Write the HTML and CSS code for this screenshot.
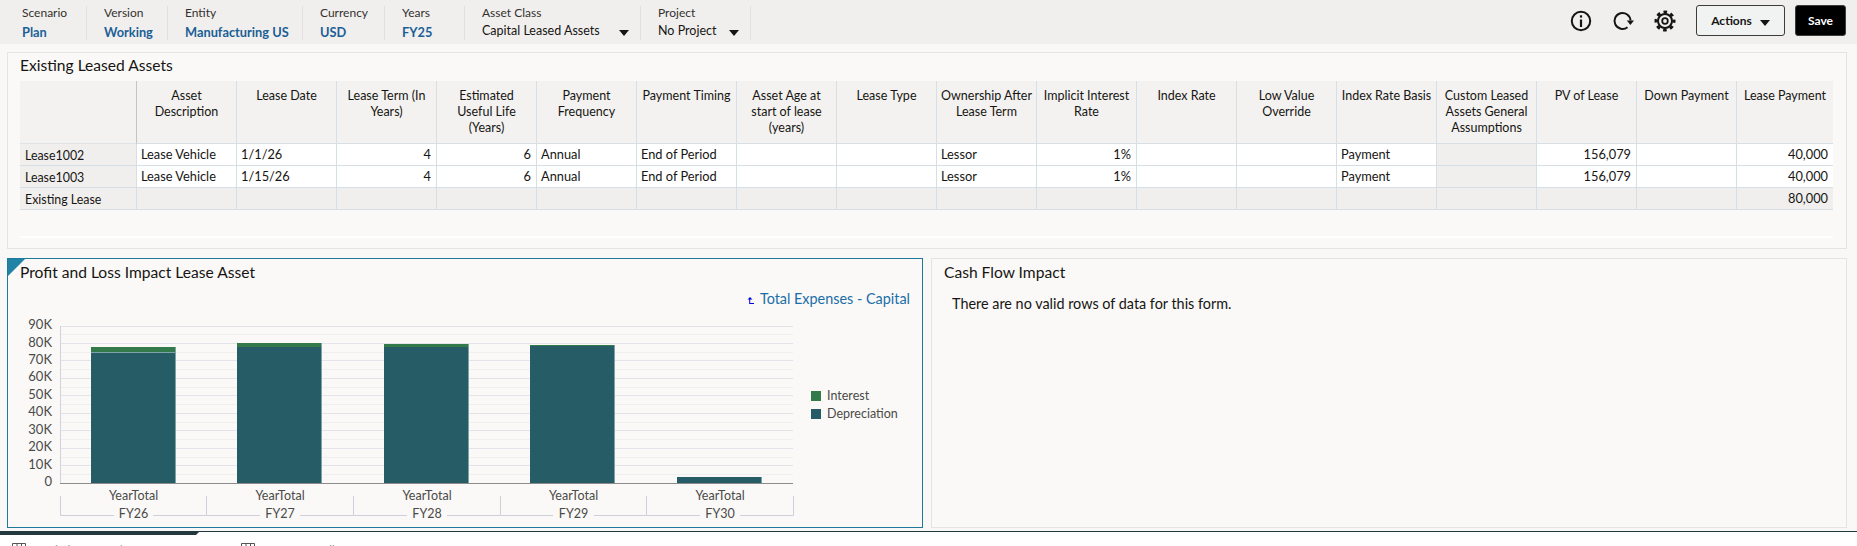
FILE: index.html
```html
<!DOCTYPE html>
<html lang="en">
<head>
<meta charset="utf-8">
<title>Existing Leased Assets</title>
<link rel="stylesheet" href="styles.css">
</head>
<body>
<header class="topbar">
  <div class="pov">
    <div class="pov-item first"><span class="pov-label">Scenario</span><span class="pov-value">Plan</span></div>
    <div class="pov-item"><span class="pov-label">Version</span><span class="pov-value">Working</span></div>
    <div class="pov-item"><span class="pov-label">Entity</span><span class="pov-value">Manufacturing US</span></div>
    <div class="pov-item"><span class="pov-label">Currency</span><span class="pov-value">USD</span></div>
    <div class="pov-item"><span class="pov-label">Years</span><span class="pov-value">FY25</span></div>
    <div class="pov-item"><span class="pov-label">Asset Class</span><span class="pov-select">Capital Leased Assets<i class="caret"></i></span></div>
    <div class="pov-item"><span class="pov-label">Project</span><span class="pov-select">No Project<i class="caret"></i></span></div>
  </div>
  <div class="tools">
    <svg class="icon" viewBox="0 0 22 22"><circle cx="11" cy="11" r="9.2" fill="none" stroke="#161513" stroke-width="2"/><rect x="9.900" y="9.500" width="2.200" height="7.500" fill="#161513"/><rect x="9.900" y="5.300" width="2.200" height="2.300" fill="#161513"/></svg>
    <svg class="icon" viewBox="0 0 22 22"><path d="M15.500 17.200A8 8 0 1 1 18.500 10.500" fill="none" stroke="#161513" stroke-width="2"/><path d="M14.800 10.500h7.200l-3.600 4.500z" fill="#161513"/></svg>
    <svg class="icon" viewBox="0 0 22 22"><circle cx="11" cy="11" r="9" fill="none" stroke="#161513" stroke-width="3" stroke-dasharray="3.600 3.469" stroke-dashoffset="1.800"/><circle cx="11" cy="11" r="7" fill="none" stroke="#161513" stroke-width="2"/><circle cx="11" cy="11" r="2.800" fill="none" stroke="#161513" stroke-width="1.800"/></svg>
    <button class="btn btn-actions" type="button">Actions<i class="caret"></i></button>
    <button class="btn btn-save" type="button">Save</button>
  </div>
</header>

<main class="content">
  <section class="panel panel-grid">
    <h2 class="panel-title">Existing Leased Assets</h2>
    <table class="grid">
      <thead>
        <tr>
          <th class="corner"></th>
          <th>Asset Description</th><th>Lease Date</th><th>Lease Term (In Years)</th><th>Estimated<br>Useful Life<br>(Years)</th><th>Payment Frequency</th><th>Payment Timing</th><th>Asset Age at start of lease (years)</th><th>Lease Type</th><th>Ownership After Lease Term</th><th>Implicit Interest Rate</th><th>Index Rate</th><th>Low Value Override</th><th>Index Rate Basis</th><th>Custom Leased Assets General Assumptions</th><th>PV of Lease</th><th>Down Payment</th><th>Lease Payment</th>
        </tr>
      </thead>
      <tbody>
        <tr>
          <th class="rowhead">Lease1002</th>
          <td>Lease Vehicle</td><td>1/1/26</td><td class="num">4</td><td class="num">6</td><td>Annual</td><td>End of Period</td><td></td><td></td><td>Lessor</td><td class="num">1%</td><td></td><td></td><td>Payment</td><td class="off"></td><td class="num">156,079</td><td></td><td class="num">40,000</td>
        </tr>
        <tr>
          <th class="rowhead">Lease1003</th>
          <td>Lease Vehicle</td><td>1/15/26</td><td class="num">4</td><td class="num">6</td><td>Annual</td><td>End of Period</td><td></td><td></td><td>Lessor</td><td class="num">1%</td><td></td><td></td><td>Payment</td><td class="off"></td><td class="num">156,079</td><td></td><td class="num">40,000</td>
        </tr>
        <tr class="total">
          <th class="rowhead">Existing Lease</th>
          <td></td><td></td><td></td><td></td><td></td><td></td><td></td><td></td><td></td><td></td><td></td><td></td><td></td><td></td><td></td><td></td><td class="num">80,000</td>
        </tr>
      </tbody>
    </table>
    <div class="grid-end"></div>
  </section>

  <div class="lower">
    <section class="panel panel-chart">
      <span class="corner-mark"></span>
      <h2 class="panel-title">Profit and Loss Impact Lease Asset</h2>
      <div class="drill">
        <svg class="drill-icon" viewBox="0 0 7 8"><path d="M3 0 0.500 2.600H2.200V7H7V6H3.200V2.600H5.500z" fill="#0000e0"/></svg>
        <a class="drill-link">Total Expenses - Capital</a>
      </div>
      <svg class="chart" viewBox="8 316 914 211" width="914" height="211">
        <path class="minor" d="M60 334.500H793M60 352.500H793M60 369.500H793M60 387.500H793M60 404.500H793M60 422.500H793M60 439.500H793M60 457.500H793M60 474.500H793"/>
        <path class="major" d="M60 326.500H793M60 343.500H793M60 360.500H793M60 378.500H793M60 395.500H793M60 413.500H793M60 430.500H793M60 448.500H793M60 465.500H793"/>
        <path class="yaxis" d="M60.500 326V483"/>
        <rect class="dep" x="91" y="352" width="85" height="131"/><rect class="int" x="91" y="347" width="85" height="5"/>
        <rect class="dep" x="237" y="347" width="85" height="136"/><rect class="int" x="237" y="343" width="85" height="4"/>
        <rect class="dep" x="384" y="347" width="85" height="136"/><rect class="int" x="384" y="344" width="85" height="3"/>
        <rect class="dep" x="530" y="346" width="85" height="137"/><rect class="int" x="530" y="345" width="85" height="1"/>
        <rect class="dep" x="677" y="477" width="85" height="6"/>
        <path class="edge" d="M91 352.500H176M175.500 347V483M321.500 343V483M468.500 344V483M614.500 345V483M761.500 477V483"/>
        <path class="base" d="M60 483.500H793"/>
        <g class="ylab">
          <text x="52" y="329">90K</text><text x="52" y="347">80K</text><text x="52" y="364">70K</text><text x="52" y="381">60K</text><text x="52" y="399">50K</text><text x="52" y="416">40K</text><text x="52" y="434">30K</text><text x="52" y="451">20K</text><text x="52" y="469">10K</text><text x="52" y="486">0</text>
        </g>
        <g class="xlab">
          <text x="133.500" y="500">YearTotal</text><text x="280" y="500">YearTotal</text><text x="427" y="500">YearTotal</text><text x="573.500" y="500">YearTotal</text><text x="720" y="500">YearTotal</text>
          <text x="133.500" y="518">FY26</text><text x="280" y="518">FY27</text><text x="427" y="518">FY28</text><text x="573.500" y="518">FY29</text><text x="720" y="518">FY30</text>
        </g>
        <path class="bracket" d="M60.500 496V515.500H114M153 515.500H206.500M206.500 496V515.500H260M300 515.500H353.500M353.500 496V515.500H407M447 515.500H500.500M500.500 496V515.500H553M594 515.500H646.500M646.500 496V515.500H700M740 515.500H793.500V496"/>
        <rect class="int" x="811" y="391" width="10" height="10"/>
        <rect class="dep" x="811" y="409" width="10" height="10"/>
        <g class="legend">
          <text x="827" y="400">Interest</text><text x="827" y="418">Depreciation</text>
        </g>
      </svg>
    </section>
    <section class="panel panel-cash">
      <h2 class="panel-title">Cash Flow Impact</h2>
      <p class="empty">There are no valid rows of data for this form.</p>
    </section>
  </div>
</main>

<footer class="tabs">
  <div class="tabline"></div>
  <div class="tabrow">
    <span class="tab tab-one"><svg class="tab-icon" viewBox="0 0 14 12"><path d="M.5.5h13v11H.5zM.5 4h13M5 .5v11M9.500 .5v11" fill="none" stroke="#555" /></svg><span class="tab-text">Existing Leased Assets</span></span>
    <span class="tab"><svg class="tab-icon" viewBox="0 0 14 12"><path d="M.5.5h13v11H.5zM.5 4h13M5 .5v11M9.500 .5v11" fill="none" stroke="#555" /></svg><span class="tab-text">Lease Details</span></span>
  </div>
</footer>
</body>
</html>
```

FILE: styles.css
```css
* { box-sizing: border-box; }
html, body { margin: 0; padding: 0; }
body {
  width: 1857px;
  height: 546px;
  overflow: hidden;
  background: #fff;
  color: #161513;
  font-family: Lato, "Noto Sans", sans-serif;
  font-size: 12px;
}

/* top bar */
.topbar {
  height: 44px;
  background: #f1efed;
  display: flex;
  justify-content: space-between;
}
.pov {
  display: grid;
  grid-template-columns: 87px 81px 135px 82px 80px 176px 110px;
  padding-top: 6px;
}
.pov-item {
  height: 34px;
  padding-left: 17px;
  border-right: 1px solid #e2e0dd;
  display: flex;
  flex-direction: column;
}
.pov-item.first { padding-left: 22px; }
.pov-label { font-size: 12px; line-height: 13px; color: #33312e; }
.pov-value { margin-top: 6px; font-size: 12.8px; line-height: 15px; font-weight: 700; color: #1b5f97; }
.pov-select { margin-top: 4px; font-size: 12.5px; line-height: 15px; padding-right: 11px; display: flex; align-items: center; justify-content: space-between; }
.caret {
  display: inline-block;
  width: 0; height: 0;
  margin-top: 5px;
  border-left: 5px solid transparent;
  border-right: 5px solid transparent;
  border-top: 6px solid #161513;
}
.tools { display: flex; align-items: flex-start; padding: 5px 11px 0 0; }
.icon { width: 22px; height: 22px; margin: 5px 20px 0 0; }
.btn {
  height: 31px;
  border-radius: 3px;
  font-family: inherit;
  font-size: 12px;
  font-weight: 700;
  padding: 0;
}
.btn-actions {
  width: 89px;
  background: #f1f3f3;
  border: 1px solid #3d3c3a;
  color: #161513;
}
.btn-actions .caret { margin-left: 8px; margin-top: 0; vertical-align: -1px; }
.btn-save {
  width: 51px;
  margin-left: 10px;
  background: #000;
  border: 1px solid #3d3c3a;
  color: #fff;
}

/* panels */
.content {
  height: 487px;
  padding: 8px 10px 0 7px;
  background: #f9f8f6;
}
.panel {
  background: #faf9f7;
  border: 1px solid #e4e5e2;
}
.panel-title {
  margin: 0;
  font-size: 15.6px;
  line-height: 20px;
  font-weight: 400;
}
.panel-grid { height: 197px; padding: 2px 0 0 12px; }
.lower {
  margin-top: 9px;
  display: grid;
  grid-template-columns: 916px 916px;
  column-gap: 8px;
}

/* data grid */
.grid {
  margin-top: 6px;
  table-layout: fixed;
  border-collapse: separate;
  border-spacing: 0;
  width: 1813px;
}
.grid th, .grid td {
  font-weight: 400;
  font-size: 12.8px;
  padding: 0;
  overflow: hidden;
}
.grid thead th {
  width: 100px;
  height: 63px;
  padding: 7px 2px 0;
  font-size: 12.5px;
  line-height: 16px;
  text-align: center;
  vertical-align: top;
  background: #f3f2f0;
  border-left: 1px solid #d6dfe6;
  border-bottom: 1px solid #d6dfe6;
}
.grid thead th.corner {
  width: 116px;
  border-left: 0;
  border-bottom: 1px solid #e0e4e6;
}
.grid thead th.corner + th { border-left: 1px solid #c4c4c4; }
.grid thead th:last-child { width: 97px; }
.grid tbody td {
  height: 22px;
  padding: 0 5px 1px 4px;
  background: #fff;
  border-left: 1px solid #d6dfe6;
  border-bottom: 1px solid #d6dfe6;
  white-space: nowrap;
}
.grid tbody .rowhead {
  height: 22px;
  padding: 1px 0 0 5px;
  font-size: 12.4px;
  text-align: left;
  background: #f1efed;
  border-bottom: 1px solid #d6dfe6;
  white-space: nowrap;
}
.grid tbody td.num { text-align: right; font-size: 12.8px; }
.grid tbody td.off, .grid .total td { background: #f0efed; }
.grid-end { margin-top: 26px; width: 1813px; height: 2px; background: #fff; }

/* chart panel */
.panel-chart {
  position: relative;
  height: 270px;
  border: 1px solid #1d7a9c;
  padding: 3px 0 0 12px;
}
.corner-mark {
  position: absolute;
  left: 0; top: 0;
  border-top: 17px solid #2283a6;
  border-right: 17px solid transparent;
}
.drill {
  margin: 8px 12px 0 0;
  display: flex;
  justify-content: flex-end;
  align-items: center;
  column-gap: 6px;
  line-height: 18px;
}
.drill-icon { width: 7px; height: 8px; margin-top: 3px; }
.drill-link { font-size: 14.4px; color: #1b6ea8; }
.chart { display: block; margin: 8px 0 0 -12px; }
.minor { stroke: #f0efee; fill: none; }
.major { stroke: #e3e4ea; fill: none; }
.yaxis { stroke: #d2d2dc; fill: none; }
.base { stroke: #8c8c8c; fill: none; }
.edge { stroke: #7ea3a6; fill: none; }
.dep { fill: #255c66; }
.int { fill: #337a4a; }
.bracket { stroke: #cfcedb; fill: none; }
.ylab text { font-size: 13px; text-anchor: end; fill: #4a4a48; }
.xlab text { font-size: 12.5px; text-anchor: middle; fill: #4a4a48; }
.legend text { font-size: 12.5px; fill: #4a4a48; }

/* cash panel */
.panel-cash { height: 270px; padding: 3px 0 0 12px; }
.empty { margin: 13px 0 0 8px; font-size: 14.4px; line-height: 18px; }

/* tabs */
.tabs { height: 15px; overflow: hidden; background: #fff; }
.tabline {
  width: 100%;
  height: 4px;
  border-top: 1px solid #1f3a40;
  position: relative;
}
.tabline::before {
  content: "";
  position: absolute;
  left: 0; top: 0;
  width: 199px; height: 3px;
  background: #24393e;
  clip-path: polygon(0 0, 100% 0, 98.5% 100%, 0 100%);
}
.tabrow { display: flex; padding: 8px 0 0 12px; }
.tab { display: flex; column-gap: 16px; align-items: flex-start; }
.tab-one { width: 229px; }
.tab-icon { width: 14px; height: 12px; flex: none; }
.tab-text { font-size: 12px; line-height: 14px; color: #9a9a98; margin-top: 0; }
```
